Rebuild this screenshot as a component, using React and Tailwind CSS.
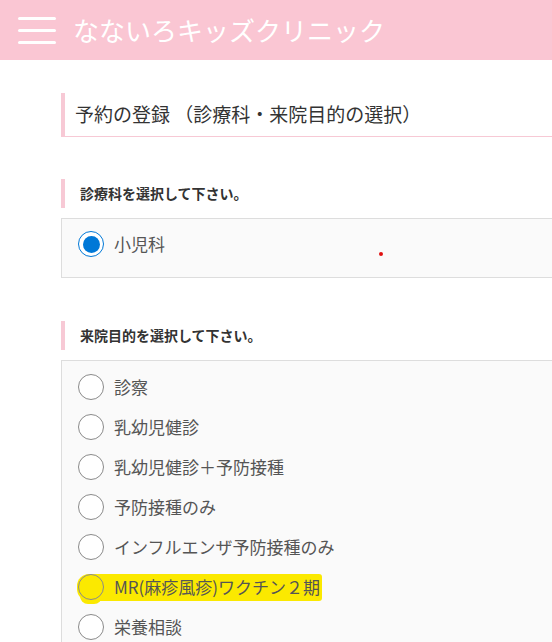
import React from "react";

const font = { fontFamily: '"Noto Sans CJK JP", "Noto Sans", sans-serif' };

function Radio({ checked }) {
  if (checked) {
    return (
      <span className="flex h-[26px] w-[26px] shrink-0 items-center justify-center rounded-full border-[1.5px] border-[#0078d7] bg-white">
        <span className="h-[17px] w-[17px] rounded-full bg-[#0078d7]" />
      </span>
    );
  }
  return <span className="block h-[26px] w-[26px] shrink-0 rounded-full border border-[#8a8a8a] bg-white" />;
}

function Row({ label, checked, highlight }) {
  if (highlight) {
    return (
      <div className="relative flex h-[26px] items-center gap-[10px]">
        <span className="absolute left-[-1px] top-[0px] h-[27px] w-[245px] rounded-l-[12px] rounded-r-[3px] bg-[#fbe900]" />
        <span className="absolute left-[2px] top-[14px] h-[16px] w-[22px] rounded-b-[8px] bg-[#fbe900]" />
        <span className="relative block h-[26px] w-[26px] shrink-0 rounded-full border border-[#8a8a8a]" />
        <span className="relative text-[17px] leading-[26px] text-[#555]">{label}</span>
      </div>
    );
  }
  return (
    <div className="flex h-[26px] items-center gap-[10px]">
      <Radio checked={checked} />
      <span className="text-[17px] leading-[26px] text-[#555]">{label}</span>
    </div>
  );
}

function Heading({ children }) {
  return (
    <div className="flex h-[29px] items-center border-l-4 border-[#f7c9d5] pl-[15px] text-[14px] font-bold text-[#333]">
      {children}
    </div>
  );
}

export default function App() {
  const purposes = [
    "診察",
    "乳幼児健診",
    "乳幼児健診＋予防接種",
    "予防接種のみ",
    "インフルエンザ予防接種のみ",
    "MR(麻疹風疹)ワクチン２期",
    "栄養相談",
  ];
  return (
    <div className="h-[642px] w-[552px] overflow-hidden bg-white" style={font}>
      <header className="flex h-[60px] items-center bg-[#fac6d3] pl-[18px]">
        <div className="flex w-[38px] flex-col gap-[9px]">
          <span className="block h-[3px] rounded-full bg-white" />
          <span className="block h-[3px] rounded-full bg-white" />
          <span className="block h-[3px] rounded-full bg-white" />
        </div>
        <div className="ml-[17px] text-[26px] leading-none text-white">なないろキッズクリニック</div>
      </header>
      <main className="pl-[61px]">
        <div className="mt-[33px] flex h-[44px] items-center border-b border-l-4 border-[#f7c9d5] pl-[10px] text-[19px] text-[#333]">
          予約の登録 （診療科・来院目的の選択）
        </div>
        <div className="mt-[42px]">
          <Heading>診療科を選択して下さい。</Heading>
        </div>
        <div className="relative mt-[10px] h-[60px] border border-r-0 border-[#ddd] bg-[#fafafa] pl-[16px] pt-[12px]">
          <Row label="小児科" checked />
          <span className="absolute left-[317px] top-[33px] h-[4px] w-[4px] rounded-full bg-[#e01010]" />
        </div>
        <div className="mt-[43px]">
          <Heading>来院目的を選択して下さい。</Heading>
        </div>
        <div className="mt-[10px] flex flex-col gap-[14px] border border-r-0 border-b-0 border-[#ddd] bg-[#fafafa] pb-[20px] pl-[16px] pt-[13px]">
          {purposes.map((p) => (
            <Row key={p} label={p} highlight={p.startsWith("MR")} />
          ))}
        </div>
      </main>
    </div>
  );
}
